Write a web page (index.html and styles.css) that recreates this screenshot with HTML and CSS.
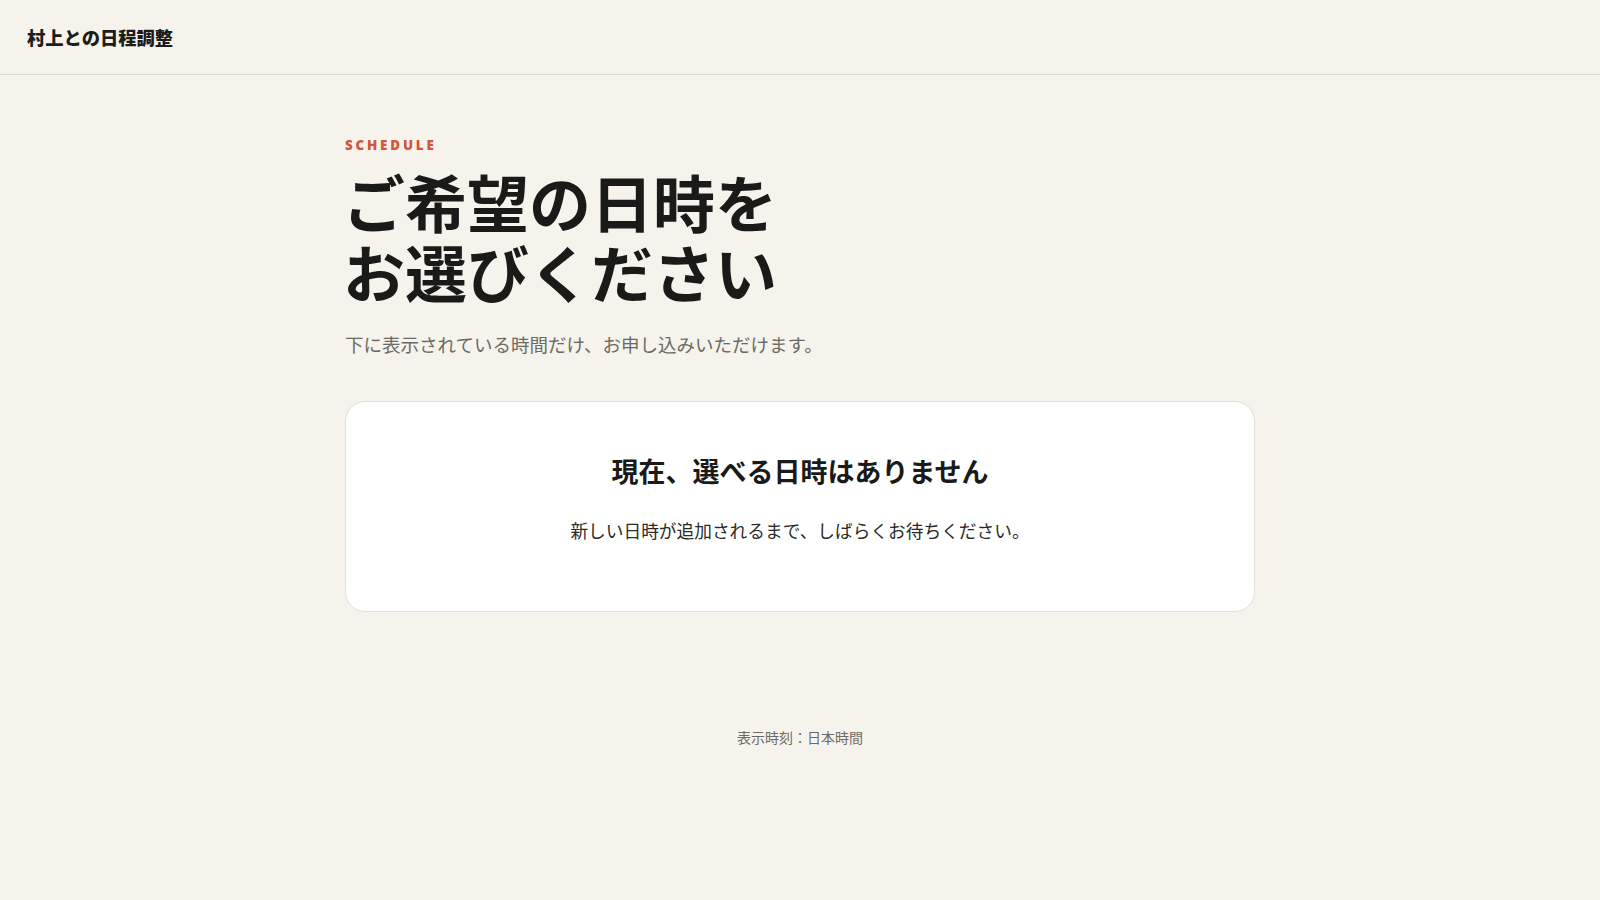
FILE: index.html
```html
<!DOCTYPE html>
<html lang="ja">
<head>
<meta charset="utf-8">
<title>村上との日程調整</title>
<link rel="stylesheet" href="styles.css">
</head>
<body>
<header class="site-header">
  <div class="brand">村上との日程調整</div>
</header>
<main class="content">
  <p class="eyebrow">SCHEDULE</p>
  <h1 class="title">ご希望の日時を<br>お選びください</h1>
  <p class="lead">下に表示されている時間だけ、お申し込みいただけます。</p>
  <section class="card">
    <h2 class="card-title">現在、選べる日時はありません</h2>
    <p class="card-text">新しい日時が追加されるまで、しばらくお待ちください。</p>
  </section>
</main>
<footer class="site-footer">表示時刻：日本時間</footer>
</body>
</html>
```
FILE: styles.css
```css
* { box-sizing: border-box; }
html, body { margin: 0; padding: 0; }
body {
  background: #f5f3ec;
  color: #1c1c1a;
  font-family: "Noto Sans CJK JP", "Noto Sans", sans-serif;
  min-height: 900px;
}
.site-header {
  height: 75px;
  border-bottom: 1px solid #dcd9d0;
  display: flex;
  align-items: center;
  padding: 0 27px;
}
.brand {
  font-size: 18.3px;
  font-weight: 900;
  color: #1c1c1a;
  margin-top: -1px;
}
.content {
  width: 910px;
  margin: 0 auto;
  padding-top: 60px;
}
.eyebrow {
  margin: 0;
  font-family: "Open Sans", "Noto Sans", sans-serif;
  font-size: 13.4px;
  font-weight: 800;
  letter-spacing: 0.21em;
  color: #d4553a;
  line-height: 20px;
}
.title {
  margin: 11px 0 0 -2px;
  font-size: 62px;
  font-weight: 700;
  line-height: 70px;
  letter-spacing: 0;
  color: #1a1a18;
}
.lead {
  margin: 24px 0 0;
  font-size: 18.5px;
  line-height: 28px;
  color: #6d6a64;
}
.card {
  margin-top: 43px;
  background: #ffffff;
  border: 1px solid #e2dfd7;
  border-radius: 20px;
  height: 211px;
  display: flex;
  flex-direction: column;
  align-items: center;
  padding-top: 49px;
}
.card-title {
  margin: 0;
  font-size: 27px;
  font-weight: 700;
  line-height: 40px;
  color: #1a1a18;
}
.card-text {
  margin: 26px 0 0;
  font-size: 17.7px;
  line-height: 26px;
  color: #2a2a28;
}
.site-footer {
  text-align: center;
  margin-top: 115px;
  font-size: 14px;
  line-height: 20px;
  color: #6d6a64;
}
```
